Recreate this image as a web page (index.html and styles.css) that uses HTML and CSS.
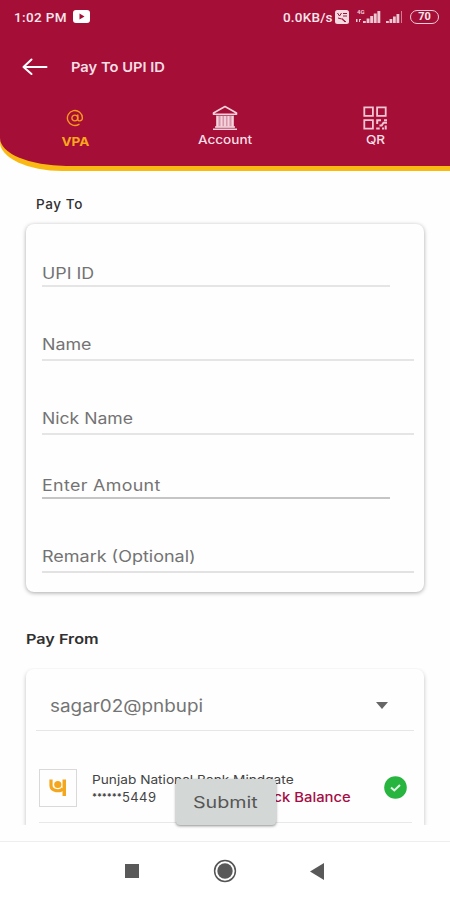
FILE: index.html
```html
<!DOCTYPE html>
<html lang="en">
<head>
<meta charset="utf-8">
<meta name="viewport" content="width=device-width, initial-scale=1">
<title>Pay To UPI ID</title>
<link rel="stylesheet" href="styles.css">
</head>
<body>
<div class="screen">
  <header class="header">
    <div class="header-body">
      <div class="status">
        <span class="time">1:02 PM</span>
        <svg class="video" width="17" height="13" viewBox="0 0 17 13"><rect width="17" height="13" rx="3" fill="#fff"/><path d="M6.500 3.500v6l5-3z" fill="#a50e37"/></svg>
        <span class="speed">0.0KB/s</span>
        <svg class="volte" width="14" height="14" viewBox="0 0 14 14"><rect width="14" height="14" rx="2.500" fill="#f3dbe2"/><path d="M2.500 3l2 3 2-3M8 3.500h4M8 6h4M3 8q4 0 7 4M7 8.500l4 3.500" fill="none" stroke="#a50e37" stroke-width="1"/></svg>
        <svg class="signal" width="25" height="15" viewBox="0 0 25 15" fill="#edc8d2"><text x="1" y="5" class="net">4G</text><path d="M0 10h1.500v3H0zM3 10h2v1H4v2H3zM7 12h2.800v2H7zM10.600 9.500h2.900V14h-2.900zM14.200 7h2.900v7h-2.900zM17.800 4.500h2.900V14h-2.900zM21.400 2h2.900v12h-2.900z"/></svg>
        <svg class="signal-two" width="17" height="15" viewBox="0 0 17 15" fill="#edc8d2"><path d="M0 12h2.800v2H0zM3.500 10h2.800v4H3.500zM7 7.500h2.800V14H7zM10.500 5h2.800v9h-2.800z"/><path d="M15 2h1v12h-1z" opacity=".6"/></svg>
        <span class="battery">70</span>
      </div>
      <div class="title-bar">
        <svg width="26" height="18" viewBox="0 0 26 18" fill="none" stroke="#fff" stroke-width="2" stroke-linecap="round" stroke-linejoin="round"><path d="M24.500 9H1.500M9.500 1.500L1.500 9l8 7"/></svg>
        <h1>Pay To UPI ID</h1>
      </div>
      <nav class="tabs">
        <div class="tab active">
          <svg width="18" height="18" viewBox="0 0 18 18" fill="none" stroke="#f79a1c" stroke-width="1.400" stroke-linecap="round"><circle cx="8.800" cy="9" r="2.900"/><path d="M11.800 6v4.400c0 2.200 4.600 2 4.600-1.400A7.500 7.500 0 1 0 13 15.300"/></svg>
          <span>VPA</span>
        </div>
        <div class="tab">
          <svg width="26" height="26" viewBox="0 0 26 26" fill="none" stroke="#f3d3dc"><path d="M1.500 8L13 1.500 24.500 8v1.300h-23z" stroke-width="1.600" stroke-linejoin="round"/><path d="M4 10.500h18v12H4z" fill="#d797a9" stroke="none"/><path d="M5.500 11v10.500M9.500 11v10.500M13 11v10.500M16.500 11v10.500M20.500 11v10.500" stroke-width="1.900"/><path d="M3 22h20M1 24.200h24" stroke-width="1.600"/></svg>
          <span>Account</span>
        </div>
        <div class="tab">
          <svg width="24" height="24" viewBox="0 0 24 24" fill="none" stroke="#f3c6d3" stroke-width="1.800"><path d="M1.300 1.300h8.600v8.600H1.300zM14.100 1.300h8.600v8.600h-8.600zM1.300 14.100h8.600v8.600H1.300z"/><path d="M13.200 14.200H18M14.200 14v4M21 14.200h3M13.200 22.500h3.500M16.500 19.500h2.200l1.800-2.800H24M19 22.500h2M22.700 19.500v4" stroke-width="2"/></svg>
          <span>QR</span>
        </div>
      </nav>
    </div>
  </header>

  <main class="content">
    <h2 class="pay-to">Pay To</h2>
    <section class="card form">
      <div class="field upi"><span>UPI ID</span></div>
      <div class="field name"><span>Name</span></div>
      <div class="field nick"><span>Nick Name</span></div>
      <div class="field amount"><span>Enter Amount</span></div>
      <div class="field remark"><span>Remark (Optional)</span></div>
    </section>
    <h2 class="pay-from">Pay From</h2>
    <section class="card source">
      <div class="select"><span>sagar02@pnbupi</span><i class="caret"></i></div>
      <div class="account">
        <div class="bank-logo">
          <svg width="18" height="17" viewBox="0 0 18 17"><path d="M2 .5v6c0 6 9.500 6.500 12 3" fill="none" stroke="#f4a61c" stroke-width="3.200"/><circle cx="8.800" cy="5.500" r="3.600" fill="#f4a61c"/><path d="M13.500 .5H17V17h-3.500z" fill="#f4a61c"/></svg>
        </div>
        <div class="account-text">
          <div class="bank">Punjab National Bank Mindgate</div>
          <div class="number-row"><span class="stars">******</span><span class="digits">5449</span><span class="balance">Check Balance</span></div>
        </div>
        <svg class="check" width="23" height="23" viewBox="0 0 23 23"><circle cx="11.500" cy="11.500" r="11.300" fill="#27b53f"/><path d="M7 11.500l3.300 3 5.700-5.500" fill="none" stroke="#e3f6e6" stroke-width="2"/></svg>
      </div>
    </section>
    <button class="submit"><span>Submit</span></button>
  </main>

  <footer class="system-nav">
    <svg width="14" height="14" viewBox="0 0 14 14"><rect width="14" height="14" fill="#595959"/></svg>
    <svg width="24" height="24" viewBox="0 0 24 24"><circle cx="12" cy="12" r="10.400" fill="none" stroke="#555" stroke-width="1.500"/><circle cx="12" cy="12" r="7.700" fill="#595959"/></svg>
    <svg width="14" height="17" viewBox="0 0 14 17"><path d="M14 0v17L0 8.500z" fill="#595959"/></svg>
  </footer>
</div>
</body>
</html>
```
FILE: styles.css
```css
* { box-sizing: border-box; }
body { margin: 0; font-family: Inter, "Open Sans", sans-serif; background: #fefefe; }
h1, h2 { margin: 0; }
svg { display: block; flex: none; }
.screen { width: 450px; height: 900px; display: flex; flex-direction: column; overflow: hidden; background: #fefefe; }

.header { height: 171px; padding-bottom: 5px; background: #fab912; border-bottom-left-radius: 62px 29px; flex: none; }
.header-body { height: 166px; background: #a50e37; border-bottom-left-radius: 66px 28px; }
.status { height: 33px; padding-left: 14px; display: flex; align-items: center; color: #f9e7ec; font: 500 13.5px/18px Roboto, sans-serif; }
.time { width: 53px; margin-right: 6px; letter-spacing: .35px; white-space: nowrap; }
.speed { width: 50px; margin-left: 193px; letter-spacing: .2px; white-space: nowrap; }
.volte { margin-left: 2px; }
.signal { margin-left: 7px; }
.signal-two { margin-left: 5px; }
.net { font: 700 6px Roboto, sans-serif; }
.battery { width: 29px; height: 14px; margin-left: 7px; border: 1.500px solid #f0ccd6; border-radius: 7px; font-size: 11px; font-weight: 700; line-height: 12px; text-align: center; }
.title-bar { height: 68px; padding-left: 22px; display: flex; align-items: center; gap: 23px; }
.title-bar h1 { color: #f7dfe6; font-size: 13.5px; font-weight: 600; line-height: 20px; white-space: nowrap; transform: scaleX(1.09); transform-origin: left; }
.tabs { display: grid; grid-template-columns: repeat(3, 1fr); padding-top: 4px; }
.tab { display: flex; flex-direction: column; align-items: center; color: #f7dfe6; font-size: 12px; font-weight: 500; line-height: 16px; }
.tab span { transform: scaleX(1.13); }
.tab svg { height: 26px; margin-bottom: 1px; }
.tab.active { color: #f9a71c; font-weight: 700; }
.tab.active span { margin-top: 2px; }

.content { position: relative; height: 670px; padding: 0 26px; flex: none; }
h2 { color: #303030; font-size: 13.5px; font-weight: 600; line-height: 20px; white-space: nowrap; transform-origin: left; }
.pay-to { width: 90px; padding: 23px 0 0 10px; font-weight: 500; letter-spacing: .6px; }
.card { background: #fefefe; border-radius: 8px; }
.form { height: 368px; margin-top: 10px; padding: 0 10px 0 16px; box-shadow: 0 1px 4px rgba(0, 0, 0, .34); }
.field { display: flex; align-items: flex-end; border-bottom: 2px solid #e5e5e5; color: #737373; font-size: 15.500px; line-height: 20px; white-space: nowrap; }
.field span { transform: translateY(1px) scaleX(1.15); transform-origin: left; }
.upi { height: 63px; margin-right: 24px; padding-bottom: 2px; }
.name { height: 74px; padding-bottom: 5px; }
.nick { height: 74px; padding-bottom: 5px; }
.nick span { transform: translateY(1px) scaleX(1.135); }
.amount { height: 64px; margin-right: 24px; padding-bottom: 2px; border-color: #c5c5c5; letter-spacing: .3px; }
.remark { height: 74px; padding-bottom: 5px; border-color: #e2e2e2; }
.remark span { transform: translateY(1px) scaleX(1.16); }
.pay-from { width: 90px; margin-top: 36px; transform: translateY(1px) scaleX(1.2); }
.source { height: 156px; margin-top: 21px; border-radius: 8px 8px 0 0; padding: 0 10px; box-shadow: 0 2px 4px rgba(0, 0, 0, .25); clip-path: inset(-1px -5px 0 -5px); }
.select { height: 62px; padding: 12px 26px 0 14px; display: flex; align-items: center; justify-content: space-between; border-bottom: 1.500px solid #e6e6e6; color: #747474; font-size: 17px; }
.select span { transform: scaleX(1.11); transform-origin: left; }
.caret { border: 6px solid transparent; border-top: 7px solid #666; border-bottom: 0; }
.account { height: 92px; margin: 0 2px 0 3px; padding: 22px 0 0; display: flex; align-items: center; border-bottom: 1.500px solid #e8e8e8; }
.bank-logo { width: 38px; height: 38px; border: 1.500px solid #d9d9d9; display: grid; place-items: center; }
.account-text { width: 270px; margin-left: 15px; color: #444; white-space: nowrap; }
.bank { width: 200px; font-size: 12px; line-height: 18px; transform: translateY(1px) scaleX(1.14); transform-origin: left; }
.number-row { display: flex; font-size: 13px; line-height: 18px; }
.stars { width: 30px; font-size: 9px; font-weight: 700; line-height: 17px; letter-spacing: -.1px; }
.digits { width: 123px; letter-spacing: .4px; }
.balance { color: #a50e45; font-weight: 500; transform: scaleX(1.14); transform-origin: left; }
.check { margin-left: 21.5px; }
.submit { position: absolute; left: 175.5px; bottom: 16px; width: 100px; height: 46px; border: 0; border-radius: 4px; background: #d3d7d5; box-shadow: 0 1px 3px rgba(0, 0, 0, .45); color: #575757; font: 400 16px/20px Inter, sans-serif; }
.submit span { display: inline-block; transform: scaleX(1.23); }

.system-nav { height: 59px; border-top: 1px solid #eee; background: #fff; display: flex; align-items: center; justify-content: center; gap: 74px; }
.system-nav svg:last-child { margin-left: -1px; }
.system-nav svg:first-child { margin-left: -2px; }
```
